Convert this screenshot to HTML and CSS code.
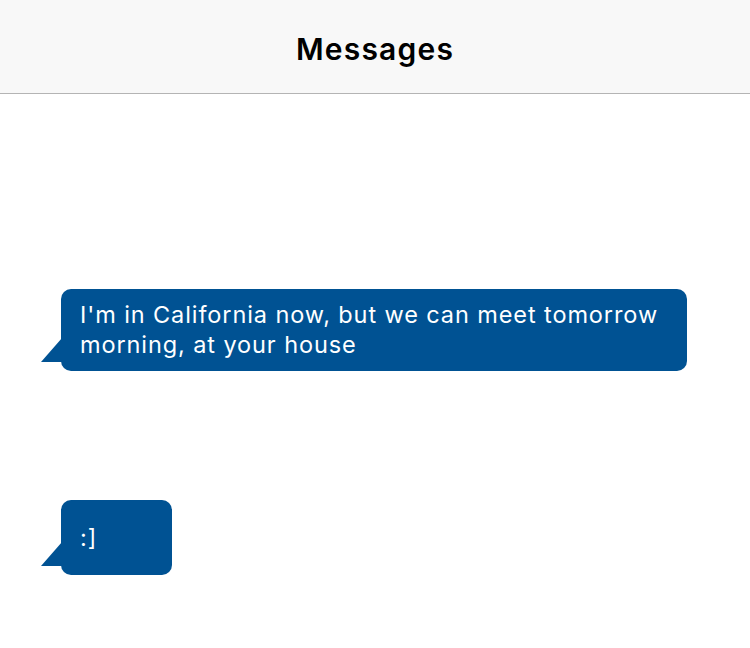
FILE: index.html
```html
<!DOCTYPE html>
<html>
<head>
<meta charset="utf-8">
<link rel="stylesheet" href="styles.css">
</head>
<body>
<header class="topbar"><h1 class="title">Messages</h1></header>
<main class="thread">
  <div class="bubble bubble-wide"><span>I'm in California now, but we can meet tomorrow morning, at your house</span></div>
  <div class="bubble bubble-small"><span>:]</span></div>
</main>
</body>
</html>
```

FILE: styles.css
```css
* { box-sizing: border-box; }
html, body { margin: 0; padding: 0; background: #fff; }
body { font-family: Inter, "Noto Sans", sans-serif; width: 750px; height: 648px; overflow: hidden; }
.topbar {
  height: 94px;
  background: #f8f8f8;
  border-bottom: 1px solid #b4b4b4;
  display: flex;
  align-items: center;
  justify-content: center;
}
.title {
  margin: 0;
  font-size: 30px;
  font-weight: 600;
  letter-spacing: 1.2px;
  color: #000;
  padding-top: 4px;
}
.thread {
  padding: 195px 0 0 61px;
  display: flex;
  flex-direction: column;
  align-items: flex-start;
  gap: 129px;
}
.bubble {
  position: relative;
  background: #005293;
  color: #fff;
  border-radius: 10px;
  font-size: 23.5px;
  line-height: 30px;
  letter-spacing: 0.9px;
  display: flex;
  align-items: center;
  padding: 0 20px 0 19px;
}
.bubble::before {
  content: "";
  position: absolute;
  left: -20px;
  bottom: 9px;
  width: 21px;
  height: 24px;
  background: #005293;
  clip-path: polygon(100% 0, 100% 100%, 0 100%);
}
.bubble-wide { width: 626px; height: 82px; }
.bubble-small { width: 111px; height: 75px; }
```
